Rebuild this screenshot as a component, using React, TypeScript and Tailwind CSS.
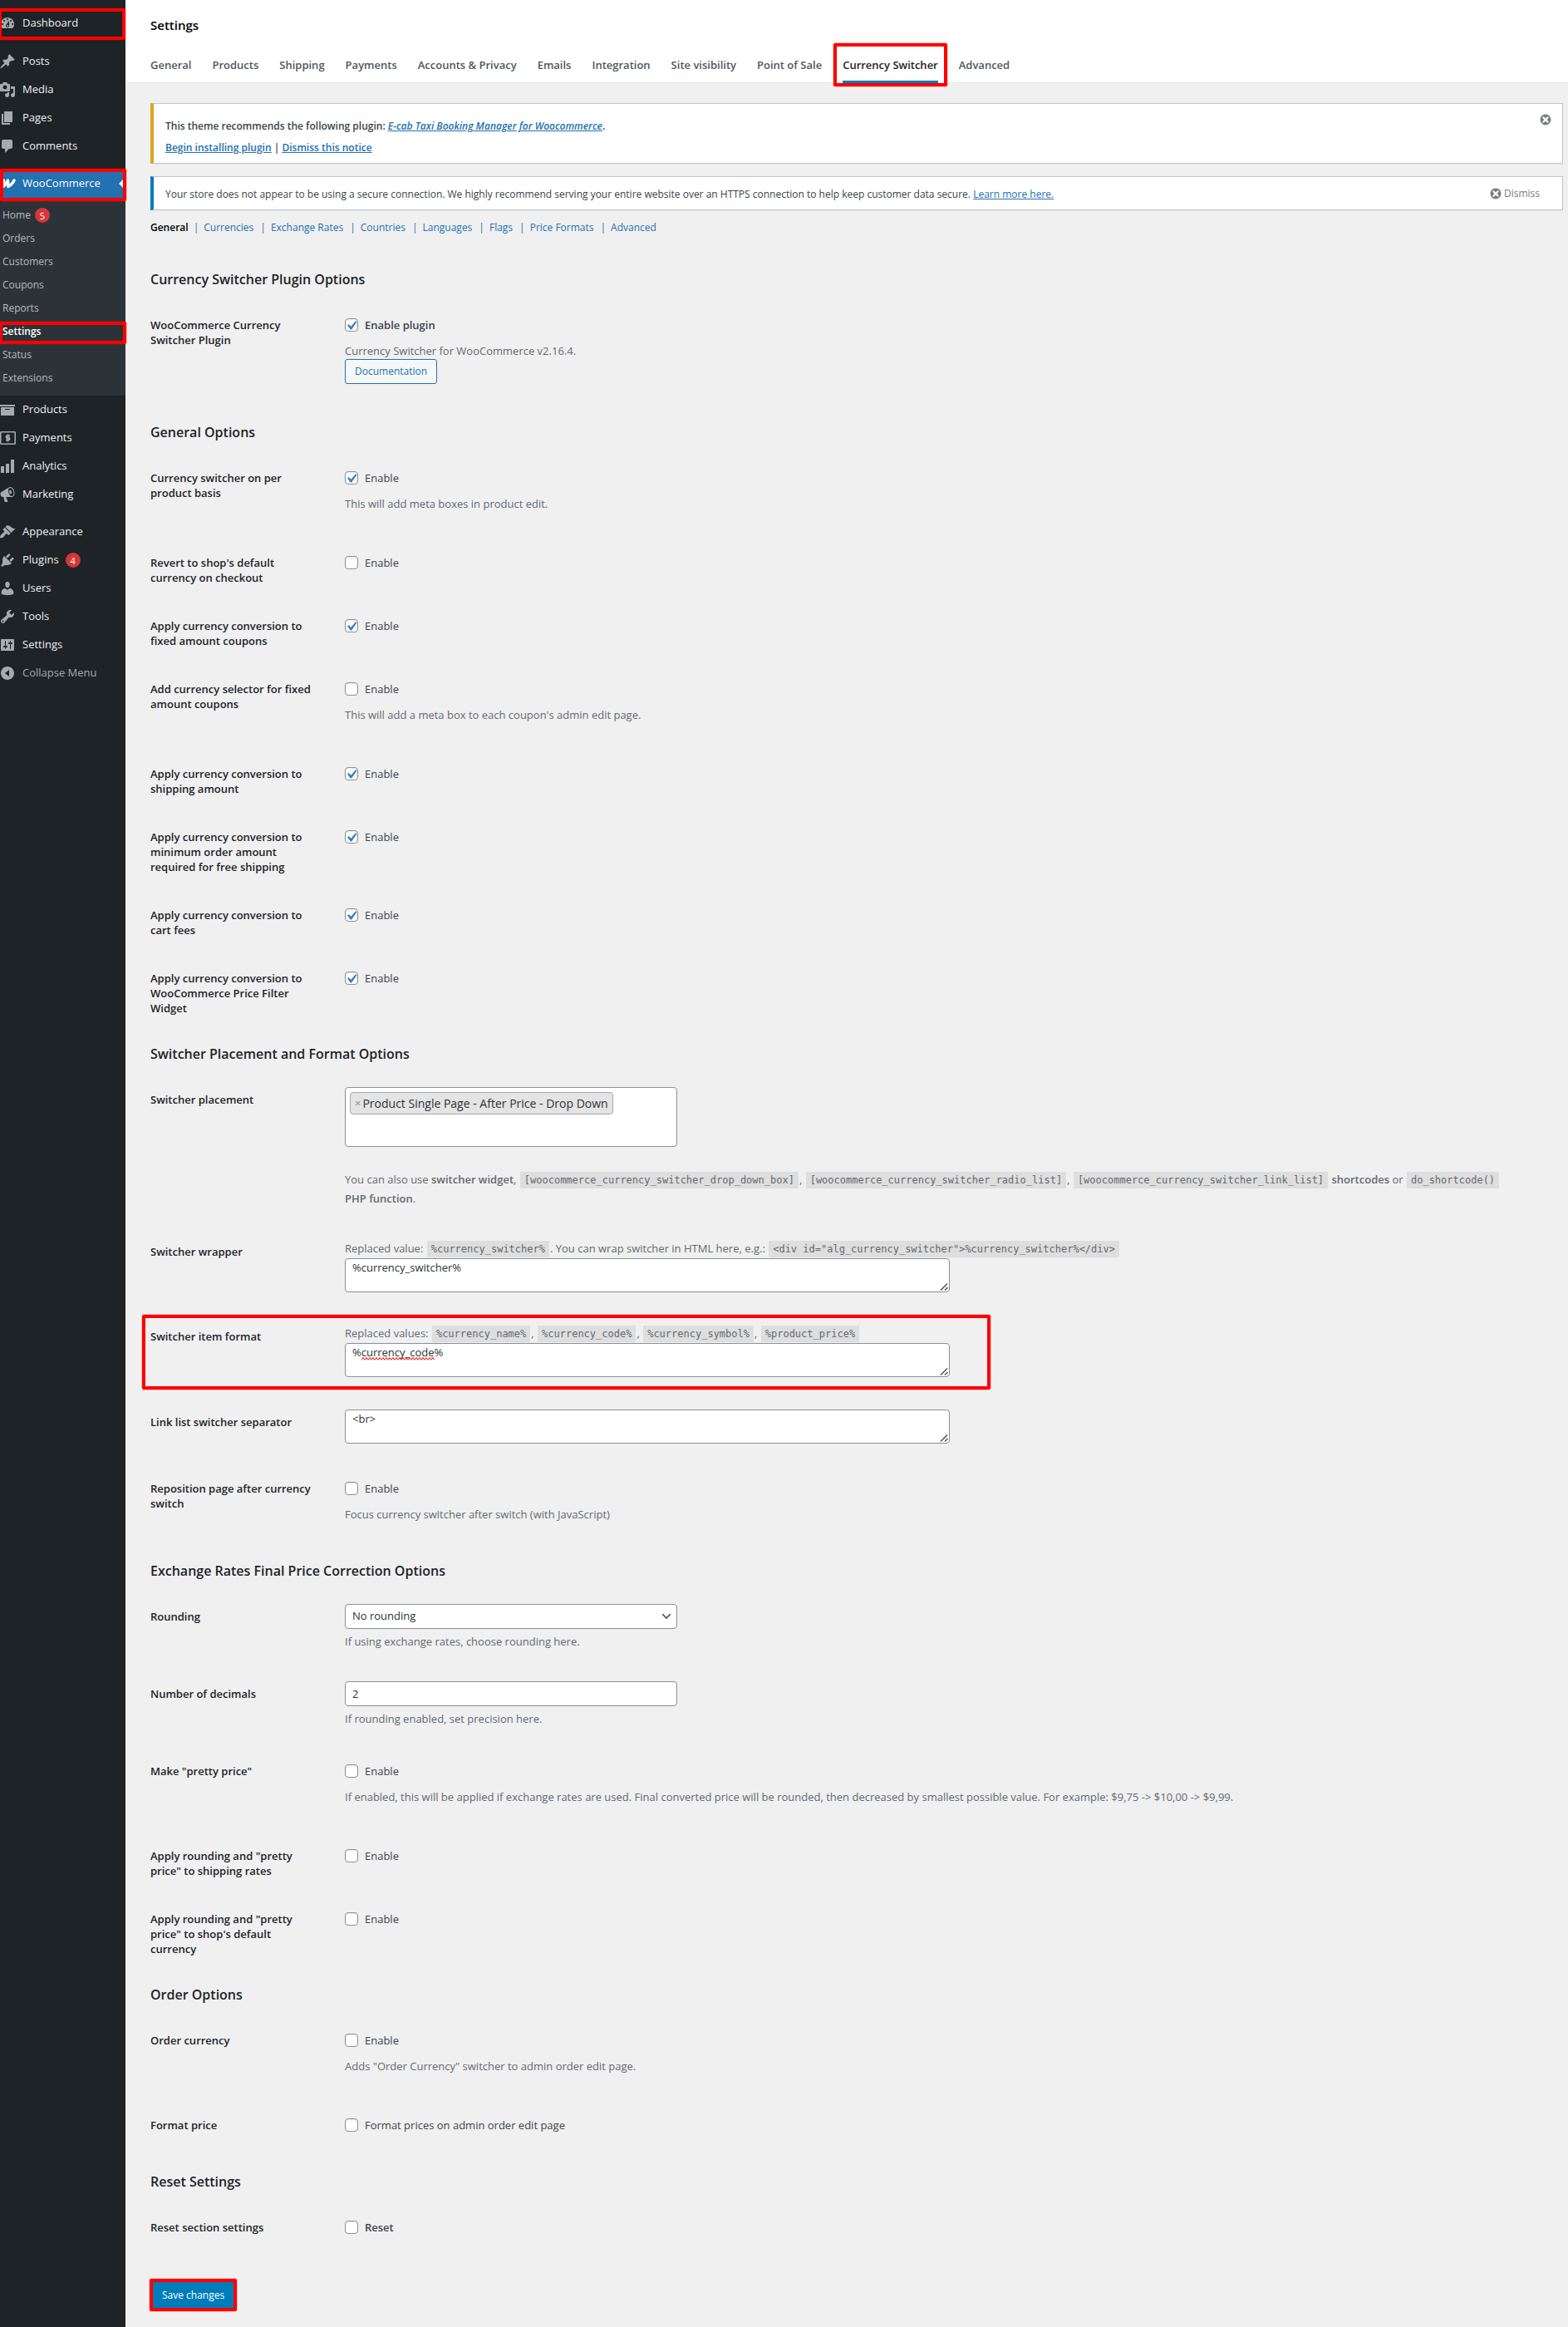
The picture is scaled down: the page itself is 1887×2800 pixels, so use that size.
import { useState, type ReactNode } from "react";
import clsx from "clsx";

const icons = {
  dashboard:
    "M3.76 16h12.48c1.1-1.37 1.76-3.11 1.76-5 0-4.42-3.58-8-8-8s-8 3.58-8 8c0 1.89.66 3.63 1.76 5zM10 4c.55 0 1 .45 1 1s-.45 1-1 1-1-.45-1-1 .45-1 1-1zM6 6c.55 0 1 .45 1 1s-.45 1-1 1-1-.45-1-1 .45-1 1-1zm8 0c.55 0 1 .45 1 1s-.45 1-1 1-1-.45-1-1 .45-1 1-1zm-5.37 5.55L12 7v6c0 1.1-.9 2-2 2s-2-.9-2-2c0-.57.24-1.08.63-1.45zM4 10c.55 0 1 .45 1 1s-.45 1-1 1-1-.45-1-1 .45-1 1-1zm12 0c.55 0 1 .45 1 1s-.45 1-1 1-1-.45-1-1 .45-1 1-1zm-5 3c0-.55-.45-1-1-1s-1 .45-1 1 .45 1 1 1 1-.45 1-1z",
  post: "M10.44 3.02l1.82-1.82 6.36 6.35-1.83 1.82c-1.05-.68-2.48-.57-3.41.36l-.75.75c-.92.93-1.04 2.35-.35 3.41l-1.83 1.82-2.41-2.41-2.8 2.79c-.42.42-3.38 2.71-3.8 2.29s1.86-3.39 2.28-3.81l2.79-2.79L4.1 9.36l1.83-1.82c1.05.69 2.48.57 3.4-.36l.75-.75c.93-.92 1.05-2.35.36-3.41z",
  media:
    "M13 11V4c0-.55-.45-1-1-1h-1.67L9 1H5L3.67 3H2c-.55 0-1 .45-1 1v7c0 .55.45 1 1 1h10c.55 0 1-.45 1-1zM7 4.5c1.38 0 2.5 1.12 2.5 2.5S8.38 9.5 7 9.5 4.5 8.38 4.5 7 5.62 4.5 7 4.5zM14 6h5v10.5c0 1.38-1.12 2.5-2.5 2.5S14 17.88 14 16.5s1.12-2.5 2.5-2.5c.17 0 .34.02.5.05V9h-3V6zm-4 8.05V13h2v3.5c0 1.38-1.12 2.5-2.5 2.5S7 17.88 7 16.5 8.12 14 9.5 14c.17 0 .34.02.5.05z",
  page: "M6 15V2h10v13H6zm-1 1h8v2H3V5h2v11z",
  comments: "M5 2h9c1.1 0 2 .9 2 2v7c0 1.1-.9 2-2 2h-2l-5 5v-5H5c-1.1 0-2-.9-2-2V4c0-1.1.9-2 2-2z",
  archive: "M19 4v2H1V4h18zM2 7h16v10H2V7zm11 3V9H7v1h6z",
  chart: "M18 18V2h-4v16h4zm-6 0V7H8v11h4zm-6 0v-8H2v8h4z",
  megaphone:
    "M18.15 5.94c.46 1.62.38 3.22-.02 4.48-.42 1.28-1.26 2.18-2.3 2.48-.16.06-.26.06-.4.06-.06.02-.12.02-.18.02-.06.02-.14.02-.22.02h-6.8l2.22 5.5c.02.14-.06.26-.14.34-.08.1-.24.16-.34.16H6.95c-.1 0-.26-.06-.34-.16-.08-.08-.16-.2-.14-.34l-1-5.5H4.25l-.02-.02c-.5.06-1.08-.18-1.54-.62s-.88-1.08-1.06-1.88c-.24-.8-.2-1.56-.02-2.2.18-.62.58-1.08 1.06-1.3l.02-.02 9-5.4c.1-.06.18-.1.24-.16.06-.04.14-.08.24-.12.16-.08.28-.12.5-.18 1.04-.3 2.24.1 3.22.98s1.84 2.24 2.26 3.86zm-2.58 5.98h-.02c.4-.1.74-.34 1.04-.7.58-.7.86-1.76.86-3.04 0-.64-.1-1.3-.28-1.98-.34-1.36-1.02-2.5-1.78-3.24s-1.68-1.1-2.46-.88c-.82.22-1.4.96-1.7 2-.32 1.04-.28 2.36.06 3.72.38 1.36 1 2.5 1.8 3.24.78.74 1.62 1.1 2.48.88zm-2.54-7.08c.22-.04.42-.02.62.04.38.16.76.48 1.02 1s.42 1.2.42 1.78c0 .3-.04.56-.12.8-.18.48-.44.84-.86.94-.34.1-.8-.06-1.14-.4s-.64-.86-.78-1.5c-.18-.62-.12-1.24.02-1.72s.48-.84.82-.94z",
  appearance:
    "M14.48 11.06L7.41 3.99l1.5-1.5c.5-.56 2.3-.47 3.51.32 1.21.8 1.43 1.28 2.91 2.1 1.18.64 2.45 1.26 4.45.85zm-.71.71L6.7 4.7 4.93 6.47c-.39.39-.39 1.02 0 1.41l1.06 1.06c.39.39.39 1.03 0 1.42-.6.6-1.43 1.11-2.21 1.69-.35.26-.7.53-1.01.84C1.43 14.23.4 16.08 1.4 17.07c.99 1 2.84-.03 4.18-1.36.31-.31.58-.66.85-1.02.57-.78 1.08-1.61 1.69-2.21.39-.39 1.02-.39 1.41 0l1.06 1.06c.39.39 1.02.39 1.41 0z",
  plugins:
    "M13.11 4.36L9.87 7.6 8 5.73l3.24-3.24c.35-.34 1.05-.2 1.56.32.52.51.66 1.21.31 1.55zm-8 1.77l.91-1.12 9.01 9.01-1.19.84c-.71.71-2.63 1.16-3.82 1.16H6.14L4.9 17.26c-.59.59-1.54.59-2.12 0-.59-.58-.59-1.53 0-2.12l1.24-1.24v-3.88c0-1.13.4-3.19 1.09-3.89zm7.26 3.97l3.24-3.24c.34-.35 1.04-.21 1.55.31.52.51.66 1.21.31 1.55l-3.24 3.25z",
  users:
    "M10 9.25c-2.27 0-2.73-3.44-2.73-3.44C7 4.02 7.82 2 9.97 2c2.16 0 2.98 2.02 2.71 3.81 0 0-.41 3.44-2.68 3.44zm0 2.57L12.72 10c2.39 0 4.52 2.33 4.52 4.53v2.49s-3.65 1.13-7.24 1.13c-3.65 0-7.24-1.13-7.24-1.13v-2.49c0-2.25 1.94-4.48 4.47-4.48z",
  tools:
    "M16.68 9.77c-1.34 1.34-3.3 1.67-4.95.99l-5.41 6.52c-.99.99-2.59.99-3.58 0s-.99-2.59 0-3.57l6.52-5.42c-.68-1.65-.35-3.61.99-4.95 1.28-1.28 3.12-1.62 4.72-1.06l-2.89 2.89 2.82 2.82 2.86-2.87c.53 1.58.18 3.39-1.08 4.65zM3.81 16.21c.4.39 1.04.39 1.43 0 .4-.4.4-1.04 0-1.43-.39-.4-1.03-.4-1.43 0-.39.39-.39 1.03 0 1.43z",
  settings:
    "M18 16V4c0-.55-.45-1-1-1H3c-.55 0-1 .45-1 1v12c0 .55.45 1 1 1h14c.55 0 1-.45 1-1zM8 11h1c.55 0 1 .45 1 1s-.45 1-1 1H8v1.5c0 .28-.22.5-.5.5s-.5-.22-.5-.5V13H6c-.55 0-1-.45-1-1s.45-1 1-1h1V5.5c0-.28.22-.5.5-.5s.5.22.5.5V11zm5-2h-1c-.55 0-1-.45-1-1s.45-1 1-1h1V5.5c0-.28.22-.5.5-.5s.5.22.5.5V7h1c.55 0 1 .45 1 1s-.45 1-1 1h-1v5.5c0 .28-.22.5-.5.5s-.5-.22-.5-.5V9z",
  collapse: "M10 2c4.42 0 8 3.58 8 8s-3.58 8-8 8-8-3.58-8-8 3.58-8 8-8zM12 6L7 10l5 4z",
  dismiss:
    "M10 2c4.42 0 8 3.58 8 8s-3.58 8-8 8-8-3.58-8-8 3.58-8 8-8zm5 11l-3-3 3-3-2-2-3 3-3-3-2 2 3 3-3 3 2 2 3-3 3 3z",
};

type IconName = keyof typeof icons | "payments" | "woo";

function Icon({ name, className = "size-5" }: { name: IconName; className?: string }) {
  if (name === "payments") {
    return (
      <svg viewBox="0 0 20 20" className={clsx("shrink-0", className)} fill="none" stroke="currentColor">
        <rect x="1.75" y="2.75" width="17.5" height="14.5" rx="1" strokeWidth="1.6" />
        <path d="M13 7.5H9.6a1.2 1.2 0 0 0 0 2.5h1.8a1.2 1.2 0 0 1 0 2.5H8M10.5 5.5v9" strokeWidth="1.8" />
      </svg>
    );
  }
  if (name === "woo") {
    return (
      <svg viewBox="0 0 20 20" className={clsx("shrink-0", className)} fill="none" stroke="currentColor">
        <path
          d="M5.5 6L5 13.5C7 12 9 9 10.5 6l.2 7.5C13.5 12 16.5 9.5 18 6"
          strokeWidth="3.4"
          strokeLinecap="round"
          strokeLinejoin="round"
        />
      </svg>
    );
  }
  return (
    <svg viewBox="0 0 20 20" className={clsx("shrink-0", className)} fill="currentColor" fillRule="evenodd">
      <path d={icons[name]} />
    </svg>
  );
}

// Red frame laid over the control it points at
function Highlight({ className }: { className: string }) {
  return (
    <span
      aria-hidden="true"
      className={clsx(
        "pointer-events-none absolute z-10 rounded-xs border-4 border-[#ff0000] shadow-[0_0_0_1px_rgba(255,0,0,0.2)]",
        className
      )}
    />
  );
}

function Badge({ children }: { children: ReactNode }) {
  return (
    <span className="flex size-[18px] items-center justify-center rounded-full bg-[#d63638] text-[11px] leading-none font-normal text-white">
      {children}
    </span>
  );
}

type MenuEntry = { label: string; icon: IconName; badge?: number };

const menuTop: MenuEntry[] = [
  { label: "Posts", icon: "post" },
  { label: "Media", icon: "media" },
  { label: "Pages", icon: "page" },
  { label: "Comments", icon: "comments" },
];

const menuStore: MenuEntry[] = [
  { label: "Products", icon: "archive" },
  { label: "Payments", icon: "payments" },
  { label: "Analytics", icon: "chart" },
  { label: "Marketing", icon: "megaphone" },
];

const menuSite: MenuEntry[] = [
  { label: "Appearance", icon: "appearance" },
  { label: "Plugins", icon: "plugins", badge: 4 },
  { label: "Users", icon: "users" },
  { label: "Tools", icon: "tools" },
  { label: "Settings", icon: "settings" },
];

const wooMenu = ["Home", "Orders", "Customers", "Coupons", "Reports", "Settings", "Status", "Extensions"];

function MenuItem({ item }: { item: MenuEntry }) {
  return (
    <li>
      <a href="#" className="-ml-px flex h-[34px] items-center gap-2 text-[#f0f0f1]">
        <Icon name={item.icon} className="size-5 text-[#a7aaad]" />
        {item.label}
        {item.badge && <Badge>{item.badge}</Badge>}
      </a>
    </li>
  );
}

function Sidebar() {
  return (
    <nav className="w-[151px] shrink-0 bg-[#1d2327] pt-[11px] text-[13px]">
      <ul className="relative">
        <MenuItem item={{ label: "Dashboard", icon: "dashboard" }} />
        <Highlight className="-top-px right-0 -left-0.5 h-[38px]" />
      </ul>
      <ul className="mt-3">
        {menuTop.map((item) => (
          <MenuItem key={item.label} item={item} />
        ))}
      </ul>
      <div className="relative mt-[11px]">
        <a href="#" className="flex h-[34px] items-center bg-[#2271b1] text-white">
          <span className="-ml-px flex grow items-center gap-2">
            <Icon name="woo" />
            WooCommerce
          </span>
          <span className="border-y-8 border-r-8 border-y-transparent border-r-[#f0f0f1]" />
        </a>
        <Highlight className="-top-px -right-px left-0 h-[39px]" />
      </div>
      <ul className="bg-[#2c3338] py-[7px] text-[12px] text-[#b5bbc0]">
        {wooMenu.map((label) => (
          <li key={label} className="relative">
            <a
              href="#"
              className={clsx("flex h-7 items-center gap-[5px] pl-[3px]", label === "Settings" && "font-semibold text-white")}
            >
              {label}
              {label === "Home" && <Badge>5</Badge>}
            </a>
            {label === "Settings" && <Highlight className="top-0.5 -right-px -left-px h-[27px]" />}
          </li>
        ))}
      </ul>
      <ul>
        {menuStore.map((item) => (
          <MenuItem key={item.label} item={item} />
        ))}
      </ul>
      <ul className="mt-[11px]">
        {menuSite.map((item) => (
          <MenuItem key={item.label} item={item} />
        ))}
      </ul>
      <button type="button" className="-ml-px flex h-[34px] items-center gap-2 text-[#a7aaad]">
        <Icon name="collapse" />
        Collapse Menu
      </button>
    </nav>
  );
}

const tabs = [
  "General",
  "Products",
  "Shipping",
  "Payments",
  "Accounts & Privacy",
  "Emails",
  "Integration",
  "Site visibility",
  "Point of Sale",
  "Currency Switcher",
  "Advanced",
];

function Header() {
  return (
    <header className="bg-white pt-5 pl-[30px] shadow-[inset_0_-1px_0_#e6e6e6]">
      <h1 className="text-[15px] leading-5 font-semibold text-black">Settings</h1>
      <nav className="flex gap-[25px] pt-7 text-[13px] leading-5 font-semibold">
        {tabs.map((tab) =>
          tab === "Currency Switcher" ? (
            <a key={tab} href="#" className="relative border-b-[3px] border-[#007cba] pb-[9px] text-[#1e1e1e]">
              {tab}
              <Highlight className="-inset-x-[11px] -top-4 -bottom-[7px]" />
            </a>
          ) : (
            <a key={tab} href="#" className="border-b-[3px] border-transparent pb-[9px] text-[#50575e]">
              {tab}
            </a>
          )
        )}
      </nav>
    </header>
  );
}

const linkClass = "text-[#2271b1] underline";
const sections = ["Currencies", "Exchange Rates", "Countries", "Languages", "Flags", "Price Formats", "Advanced"];

function Notices() {
  return (
    <div className="text-[12px]">
      <div className="mt-6 flex justify-between border border-l-4 border-[#c3c4c7] border-l-[#dba617] bg-white pr-3 pl-[14px] shadow-[0_1px_1px_rgba(0,0,0,0.04)]">
        <div className="flex flex-col gap-1.5 pt-[17px] pb-2 leading-5 font-semibold">
          <p>
            This theme recommends the following plugin:{" "}
            <a href="#" className={clsx(linkClass, "italic")}>
              E-cab Taxi Booking Manager for Woocommerce
            </a>
            .
          </p>
          <p>
            <a href="#" className={linkClass}>
              Begin installing plugin
            </a>{" "}
            |{" "}
            <a href="#" className={linkClass}>
              Dismiss this notice
            </a>
          </p>
        </div>
        <button type="button" aria-label="Dismiss this notice" className="mt-[11px] self-start text-[#787c82]">
          <Icon name="dismiss" className="size-4" />
        </button>
      </div>
      <div className="mt-[15px] flex justify-between border border-l-4 border-[#c3c4c7] border-l-[#007cba] bg-white pr-[27px] pl-[14px] shadow-[0_1px_1px_rgba(0,0,0,0.04)]">
        <p className="pt-[11px] pb-2 leading-5">
          Your store does not appear to be using a secure connection. We highly recommend serving your entire website
          over an HTTPS connection to help keep customer data secure.{" "}
          <a href="#" className={linkClass}>
            Learn more here.
          </a>
        </p>
        <button type="button" className="flex items-center gap-0.5 text-[#787c82]">
          <Icon name="dismiss" className="size-4" />
          Dismiss
        </button>
      </div>
      <ul className="mt-[11px] flex leading-5 text-[#2271b1]">
        <li>
          <a href="#" className="font-semibold text-black">
            General
          </a>
        </li>
        {sections.map((name, i) => (
          <li key={name} className="flex">
            <span className={clsx("pr-1.5", i === 0 ? "pl-1.5" : "pl-2")}>|</span>
            <a href="#">{name}</a>
          </li>
        ))}
      </ul>
    </div>
  );
}

function Section({ title, className = "mt-[14px]", children }: { title: string; className?: string; children: ReactNode }) {
  return (
    <section>
      <h2 className={clsx("mb-[14px] text-[16px] leading-6 font-semibold text-[#1d2327]", className)}>{title}</h2>
      {children}
    </section>
  );
}

function Row({
  id,
  label,
  className = "pt-[14px] pb-6",
  children,
}: {
  id: string;
  label: string;
  className?: string;
  children: ReactNode;
}) {
  return (
    <div className="flex">
      <label htmlFor={id} className="w-[234px] shrink-0 py-5 pr-[34px] leading-[18px] font-semibold text-[#1d2327]">
        {label}
      </label>
      <div className={clsx("min-w-0 grow", className)}>{children}</div>
    </div>
  );
}

function Description({ className, children }: { className: string; children: ReactNode }) {
  return <p className={clsx("text-[#646970]", className)}>{children}</p>;
}

function CheckRow({
  id,
  label,
  text = "Enable",
  bold,
  checked = false,
  description,
  children,
}: {
  id: string;
  label: string;
  text?: string;
  bold?: boolean;
  checked?: boolean;
  description?: string;
  children?: ReactNode;
}) {
  const [on, setOn] = useState(checked);
  return (
    <Row id={id} label={label} className="pt-[19px] pb-8">
      <label className="flex w-fit items-center gap-2 leading-5">
        <span className="relative size-4">
          <input
            id={id}
            type="checkbox"
            checked={on}
            onChange={() => setOn(!on)}
            className="block size-4 appearance-none rounded border border-[#8c8f94] bg-white shadow-[inset_0_1px_2px_rgba(0,0,0,0.1)]"
          />
          {on && (
            <svg viewBox="3 2 14.5 14.5" className="pointer-events-none absolute inset-0 size-4" fill="#3582c4">
              <path d="M14.83 4.89l1.34.94-5.81 8.38H9.02L5.78 9.67l1.34-1.25 2.57 2.4z" />
            </svg>
          )}
        </span>
        <span className={clsx(bold && "font-semibold")}>{text}</span>
      </label>
      {description && <Description className="mt-[11px] leading-5">{description}</Description>}
      {children}
    </Row>
  );
}

function Code({ children }: { children: ReactNode }) {
  return (
    <code className="mx-px bg-[#dedede] px-[5px] py-[3px] font-['DejaVu_Sans_Mono',monospace] text-[12px]">
      {children}
    </code>
  );
}

const inputClass = "rounded border border-[#8c8f94] bg-white text-[#2c3338]";

function FormatArea({ id, value, children }: { id: string; value: string; children?: ReactNode }) {
  return (
    <div className="relative w-[728px] max-w-full">
      <textarea
        id={id}
        defaultValue={value}
        spellCheck={false}
        className={clsx(inputClass, "block h-[41px] w-full resize-none px-2 leading-5")}
      />
      <svg
        viewBox="0 0 10 10"
        className="pointer-events-none absolute right-0.5 bottom-0.5 size-2.5"
        fill="none"
        stroke="#50575e"
        strokeWidth="1.5"
      >
        <path d="M1 9.5L9 1.5M6 9.5L9.5 6" />
      </svg>
      {children}
    </div>
  );
}

// Spell checker's wavy line below a word
function Squiggle({ className }: { className: string }) {
  return (
    <svg className={clsx("pointer-events-none absolute h-1 overflow-hidden", className)} aria-hidden="true">
      <defs>
        <pattern id="wave" width="4" height="4" patternUnits="userSpaceOnUse">
          <path d="M0 3.5L2 .5 4 3.5" fill="none" stroke="#f00000" strokeWidth="1" />
        </pattern>
      </defs>
      <rect width="100%" height="4" fill="url(#wave)" />
    </svg>
  );
}

function PlacementField() {
  return (
    <div className={clsx(inputClass, "h-[72px] w-[400px] p-[5px]")}>
      <div className="flex h-[27px] w-fit items-center gap-0.5 rounded border border-[#aaaaaa] bg-[#e4e4e4] px-[5px]">
        <button type="button" aria-label="Remove item" className="leading-none font-semibold text-[#999999]">
          ×
        </button>
        <span className="text-[14px]">Product Single Page - After Price - Drop Down</span>
      </div>
    </div>
  );
}

export default function App() {
  return (
    <div className="flex bg-[#f0f0f1] font-['Open_Sans',sans-serif] text-[13px] text-[#3c434a]">
      <Sidebar />
      <div className="min-w-0 grow">
        <Header />
        <main className="pr-1.5 pb-[22px] pl-[30px]">
          <Notices />
          <form onSubmit={(e) => e.preventDefault()}>
            <Section title="Currency Switcher Plugin Options" className="mt-10">
              <CheckRow
                id="plugin"
                label="WooCommerce Currency Switcher Plugin"
                text="Enable plugin"
                bold
                checked
                description="Currency Switcher for WooCommerce v2.16.4."
              >
                <a
                  href="#"
                  className="flex h-[30px] w-fit items-center rounded-[3px] border border-[#2271b1] bg-[#f6f7f7] px-[11px] text-[12px] text-[#2271b1]"
                >
                  Documentation
                </a>
              </CheckRow>
            </Section>

            <Section title="General Options">
              <CheckRow
                id="per-product"
                label="Currency switcher on per product basis"
                checked
                description="This will add meta boxes in product edit."
              />
              <CheckRow id="revert" label="Revert to shop's default currency on checkout" />
              <CheckRow id="coupons" label="Apply currency conversion to fixed amount coupons" checked />
              <CheckRow
                id="coupon-selector"
                label="Add currency selector for fixed amount coupons"
                description="This will add a meta box to each coupon's admin edit page."
              />
              <CheckRow id="shipping" label="Apply currency conversion to shipping amount" checked />
              <CheckRow
                id="free-shipping"
                label="Apply currency conversion to minimum order amount required for free shipping"
                checked
              />
              <CheckRow id="cart-fees" label="Apply currency conversion to cart fees" checked />
              <CheckRow
                id="price-filter"
                label="Apply currency conversion to WooCommerce Price Filter Widget"
                checked
              />
            </Section>

            <Section title="Switcher Placement and Format Options">
              <Row id="placement" label="Switcher placement">
                <PlacementField />
                <Description className="mt-7 leading-[22px]">
                  You can also use <b className="font-semibold">switcher widget</b>,{" "}
                  <Code>[woocommerce_currency_switcher_drop_down_box]</Code>,{" "}
                  <Code>[woocommerce_currency_switcher_radio_list]</Code>,{" "}
                  <Code>[woocommerce_currency_switcher_link_list]</Code>{" "}
                  <b className="font-semibold">shortcodes</b> or <Code>do_shortcode()</Code>
                  <br />
                  <b className="font-semibold">PHP function</b>.
                </Description>
              </Row>
              <Row id="wrapper" label="Switcher wrapper" className="pt-[14px] pb-6">
                <Description className="leading-[22px]">
                  Replaced value: <Code>%currency_switcher%</Code>. You can wrap switcher in HTML here, e.g.:{" "}
                  <Code>{'<div id="alg_currency_switcher">%currency_switcher%</div>'}</Code>
                </Description>
                <FormatArea id="wrapper" value="%currency_switcher%" />
              </Row>
              <div className="relative">
                <Row id="item-format" label="Switcher item format" className="pt-[14px] pb-[25px]">
                  <Description className="leading-[22px]">
                    Replaced values: <Code>%currency_name%</Code>, <Code>%currency_code%</Code>,{" "}
                    <Code>%currency_symbol%</Code>, <Code>%product_price%</Code>
                  </Description>
                  <FormatArea id="item-format" value="%currency_code%">
                    <Squiggle className="top-[17px] left-5 w-[88px]" />
                  </FormatArea>
                </Row>
                <Highlight className="top-[3px] -left-[10px] h-[90px] w-[1021px]" />
              </div>
              <Row id="separator" label="Link list switcher separator" className="pt-[14px] pb-[25px]">
                <FormatArea id="separator" value="<br>" />
              </Row>
              <CheckRow
                id="reposition"
                label="Reposition page after currency switch"
                description="Focus currency switcher after switch (with JavaScript)"
              />
            </Section>

            <Section title="Exchange Rates Final Price Correction Options">
              <Row id="rounding" label="Rounding">
                <div className="relative w-[400px]">
                  <select id="rounding" className={clsx(inputClass, "block h-[30px] w-full appearance-none px-2")}>
                    <option>No rounding</option>
                  </select>
                  <svg
                    viewBox="0 0 20 20"
                    className="pointer-events-none absolute top-[7px] right-[5px] size-4"
                    fill="#555555"
                  >
                    <path d="M5 6l5 5 5-5 2 1-7 7-7-7 2-1z" />
                  </svg>
                </div>
                <Description className="mt-[5px] leading-5">If using exchange rates, choose rounding here.</Description>
              </Row>
              <Row id="decimals" label="Number of decimals">
                <input
                  id="decimals"
                  type="number"
                  defaultValue={2}
                  className={clsx(inputClass, "block h-[30px] w-[400px] px-2")}
                />
                <Description className="mt-[5px] leading-5">If rounding enabled, set precision here.</Description>
              </Row>
              <CheckRow
                id="pretty"
                label={'Make "pretty price"'}
                description="If enabled, this will be applied if exchange rates are used. Final converted price will be rounded, then decreased by smallest possible value. For example: $9,75 -> $10,00 -> $9,99."
              />
              <CheckRow id="pretty-shipping" label={'Apply rounding and "pretty price" to shipping rates'} />
              <CheckRow id="pretty-default" label={'Apply rounding and "pretty price" to shop\'s default currency'} />
            </Section>

            <Section title="Order Options">
              <CheckRow
                id="order-currency"
                label="Order currency"
                description={'Adds "Order Currency" switcher to admin order edit page.'}
              />
              <CheckRow id="format-price" label="Format price" text="Format prices on admin order edit page" />
            </Section>

            <Section title="Reset Settings">
              <CheckRow id="reset" label="Reset section settings" text="Reset" bold />
            </Section>

            <div className="relative mt-6 w-fit">
              <button type="submit" className="h-8 rounded-[3px] bg-[#007cba] px-[14px] text-[12px] text-white">
                Save changes
              </button>
              <Highlight className="-inset-x-px -top-1 -bottom-[3px]" />
            </div>
          </form>
        </main>
      </div>
    </div>
  );
}
